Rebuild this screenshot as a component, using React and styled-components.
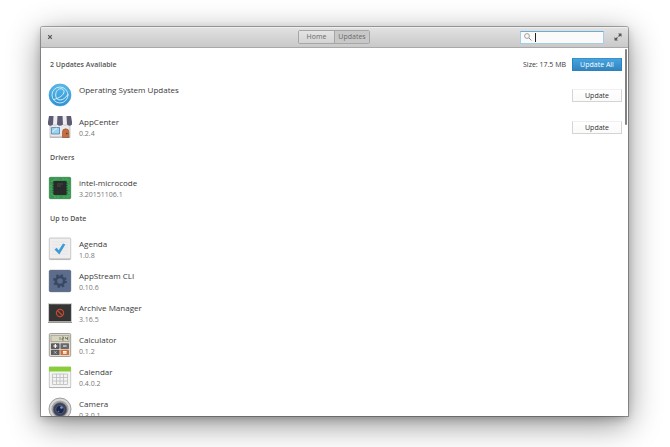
import React from "react";
import styled, { createGlobalStyle } from "styled-components";

const GlobalStyle = createGlobalStyle`
  * { box-sizing: border-box; }
  body {
    margin: 0;
    background: #fff;
    color: #3a3a3a;
    font-family: "Open Sans", "Noto Sans", sans-serif;
    font-size: 7px;
  }
  button, input { font: inherit; color: inherit; }
`;

const Desktop = styled.div`
  height: 100vh;
  padding: 27px 42px 31px 41px;
  display: flex;
`;

const Window = styled.main`
  flex: 1;
  min-width: 0;
  display: flex;
  flex-direction: column;
  background: #fff;
  border-radius: 2px 2px 0 0;
  box-shadow: 0 0 0 1px rgba(0, 0, 0, 0.3), 0 3px 8px rgba(0, 0, 0, 0.2),
    0 8px 32px rgba(0, 0, 0, 0.45);
`;

const HeaderBar = styled.header`
  height: 21px;
  flex: none;
  display: grid;
  grid-template-columns: 1fr auto 1fr;
  align-items: center;
  padding: 0 6px 0 5px;
  background: linear-gradient(#e2e2e2, #c9c9c9);
  border-bottom: 1px solid #a9a9a9;
  border-radius: 2px 2px 0 0;
  box-shadow: inset 0 1px #efefef;
`;

const IconButton = styled.button`
  width: 8px;
  height: 8px;
  padding: 0;
  border: 0;
  background: none;
  display: grid;
  place-items: center;
`;

const Switcher = styled.nav`
  display: flex;
  height: 14px;
  border: 1px solid #a6a6a6;
  border-radius: 2px;
  overflow: hidden;
`;

const SwitchButton = styled.button`
  width: 35px;
  padding: 0;
  border: 0;
  line-height: 12px;
  color: #686868;
  background: ${(p) => (p.$active ? "#c8c8c8" : "linear-gradient(#e4e4e4, #d4d4d4)")};

  & + & { border-left: 1px solid #a6a6a6; }
`;

const HeaderEnd = styled.div`
  display: flex;
  justify-content: flex-end;
  align-items: center;
  gap: 10px;
`;

const SearchBox = styled.label`
  position: relative;
  width: 84px;
  height: 13px;
  display: flex;
  align-items: center;
  gap: 3px;
  padding-left: 3px;
  background: #fafafa;
  border: 1px solid #a4cde6;
  border-top-color: #6aaed8;
`;

const SearchInput = styled.input`
  flex: 1;
  min-width: 0;
  height: 11px;
  padding: 0;
  border: 0;
  outline: 0;
  background: none;
  caret-color: transparent;
`;

const Caret = styled.span`
  position: absolute;
  left: 14px;
  top: 1px;
  width: 1px;
  height: 9px;
  background: #222;
`;

const Content = styled.div`
  position: relative;
  flex: 1;
  min-height: 0;
  overflow: hidden;
  padding: 2px 6px 0 7px;
`;

const ScrollThumb = styled.span`
  position: absolute;
  top: 1px;
  right: 1px;
  width: 2px;
  height: 76px;
  border-radius: 1px;
  background: #828282;
`;

const SectionHead = styled.div`
  height: 29px;
  display: flex;
  align-items: center;
  gap: 6px;
  padding-left: 2px;
`;

const SectionTitle = styled.h2`
  flex: 1;
  margin: 0;
  font-size: 7px;
  font-weight: 600;
  color: #555;
`;

const List = styled.ul`
  margin: 0;
  padding: 0;
  list-style: none;
`;

const Row = styled.li`
  height: 32px;
  display: flex;
  align-items: center;
  gap: 7px;
`;

const AppIcon = styled.svg`
  width: 24px;
  height: 24px;
  flex: none;
`;

const Details = styled.div`
  flex: 1;
  height: 24px;
`;

const Name = styled.div`
  font-size: 8px;
  line-height: 13px;
`;

const Version = styled.div`
  line-height: 12px;
  color: #777;
`;

const ActionButton = styled.button`
  width: 50px;
  height: 13px;
  padding: 0;
  line-height: 11px;
  border: 1px solid ${(p) => (p.$primary ? "#2f81bb" : "#d4d4d4")};
  border-top-color: ${(p) => (p.$primary ? "#3b90ca" : "#f0f0f0")};
  color: ${(p) => (p.$primary ? "#fff" : "#333")};
  background: ${(p) => (p.$primary ? "linear-gradient(#45a3df, #3185c0)" : "linear-gradient(#fff, #fafafa)")};
`;

const icons = {
  system: (
    <>
      <defs>
        <linearGradient id="sys" x1="0" y1="0" x2="0" y2="1">
          <stop stopColor="#5abbe9" />
          <stop offset="1" stopColor="#2d91d2" />
        </linearGradient>
      </defs>
      <circle cx="12" cy="12" r="11" fill="url(#sys)" stroke="#3a9bd3" strokeWidth=".6" />
      <g fill="none" stroke="#e6f6ff" strokeLinecap="round">
        <circle cx="12" cy="12" r="8" strokeWidth=".8" />
        <path d="M5.500 16.500C11 15.500 16 12 16 8.700c0-2-1.500-3-3.300-3-3 0-5 3-5 6.300 0 3 1.600 5 4.300 5 3 0 5.500-2 7.500-5" strokeWidth=".9" />
      </g>
    </>
  ),
  store: (
    <>
      <path d="M2 8h20v14.500H2z" fill="#e9e9ec" stroke="#aaa" strokeWidth=".6" />
      <path d="M2 21.500h20v1.300H2z" fill="#b9b3b4" />
      <path d="M1 1h22l1 6v2.500H0V7z" fill="#efecee" />
      <path d="M1 1h4.500L5 9.500Q2.500 12 0 9.500V7zM9.500 1h5l.5 8.500q-3 2.500-6 0zM18.500 1H23l1 6v2.500q-2.500 2.500-5 0z" fill="#5e5b75" />
      <path d="M5 9.500q2 2 4 0M15 9.500q2 2 4 0" fill="#e4e1e4" stroke="#b9b6bd" strokeWidth=".5" />
      <path d="M3.500 12.500h8V19h-8z" fill="#9bd3ef" stroke="#5583a6" strokeWidth=".8" />
      <path d="m4 17 5-4" stroke="#c6e9f8" strokeWidth="1.200" />
      <path d="M14.500 22.500V17a3.200 3.200 0 0 1 6.400 0v5.500z" fill="#c36f41" stroke="#8e4c2a" strokeWidth=".6" />
      <circle cx="18.800" cy="18.500" r=".8" fill="#5d2f1a" />
    </>
  ),
  chip: (
    <>
      <rect x="1.300" y="1.300" width="21.400" height="21.400" rx="1" fill="#369650" stroke="#26733a" strokeWidth=".6" />
      <path d="M3 5h3V3h5M14 3h6v4M3 9v6M3 18h3v3h6M15 21h6v-5M21 9v4" fill="none" stroke="#62b471" strokeWidth=".7" strokeDasharray="2 1" />
      <path d="M4.500 7h15M4.500 9.500h15M4.500 12h15M4.500 14.500h15M4.500 17h15" stroke="#184d28" strokeWidth="1" />
      <rect x="5.500" y="5" width="13" height="14" rx=".6" fill="#292b2b" />
      <path d="M9 8h6M9 10h4" stroke="#505050" strokeWidth=".8" />
    </>
  ),
  agenda: (
    <>
      <rect x="1.300" y="1" width="21.400" height="21.600" rx="1" fill="#eee" stroke="#bcbcbc" strokeWidth=".8" />
      <path d="M1.500 22h21" stroke="#aaa" />
      <path d="M4 5h16M4 8h16M4 11h16M4 14h16M4 17h16" stroke="#dfdfdf" strokeWidth=".6" />
      <path d="m6.500 12.500 2.200-1.700 2 2.400L15 6.500l2.300 1-6 10z" fill="#409bd4" />
    </>
  ),
  gear: (
    <>
      <rect x="1.300" y="1.300" width="21.400" height="21.400" rx="1.200" fill="#5c6c8c" stroke="#46546f" strokeWidth=".7" />
      <circle cx="12" cy="12" r="4.100" fill="none" stroke="#394863" strokeWidth="2.600" />
      <circle cx="12" cy="12" r="5.900" fill="none" stroke="#394863" strokeWidth="2" strokeDasharray="2.317 2.317" />
    </>
  ),
  archive: (
    <>
      <rect x="0" y="2" width="24" height="20" rx=".6" fill="#d6d6d6" />
      <rect x="1.200" y="3.600" width="21.600" height="16.400" fill="#343434" stroke="#222" strokeWidth=".5" />
      <path d="M0 21.500h24" stroke="#999" />
      <circle cx="12" cy="12" r="3.600" fill="none" stroke="#c6492f" strokeWidth="1.200" />
      <path d="m9.500 9.500 5 5" stroke="#c6492f" strokeWidth="1.200" />
    </>
  ),
  calculator: (
    <>
      <rect x="1.300" y=".5" width="21.400" height="23" rx="1.200" fill="#dcd8d4" stroke="#8e8a86" strokeWidth=".8" />
      <rect x="3" y="2.500" width="18" height="6.200" fill="#d5d4bc" stroke="#96937f" strokeWidth=".6" />
      <path d="M12 4v3M14 4h1.500v1.500H14V7h2M17.500 4v1.500h2M19.500 4v3" fill="none" stroke="#625f4f" strokeWidth=".7" />
      <rect x="3" y="10.300" width="8.500" height="5.600" rx=".6" fill="#5b5b5b" />
      <rect x="12.500" y="10.300" width="8.500" height="5.600" rx=".6" fill="#696969" />
      <rect x="3" y="16.700" width="8.500" height="5.400" rx=".6" fill="#5b5b5b" />
      <rect x="12.500" y="16.700" width="8.500" height="5.400" rx=".6" fill="#d86c35" />
      <path d="M5.300 13h4M7.300 11v4M15 13h3.600" stroke="#fff" strokeWidth="1.200" />
      <path d="m6 18.200 2.500 2.500M8.500 18.200 6 20.700" stroke="#ccc" strokeWidth=".8" />
      <path d="M15 18.700h3.600M15 20.200h3.600" stroke="#fff" strokeWidth="1.200" />
    </>
  ),
  calendar: (
    <>
      <rect x="1.300" y="2" width="21.400" height="20.600" rx=".8" fill="#f3f3f3" stroke="#b6b6b6" strokeWidth=".7" />
      <path d="M1 1.800h22V6.500H1z" fill="#88cf37" />
      <path d="M1 22.500h22" stroke="#aaa" strokeWidth=".8" />
      <path d="M4.500 9h15v10.500h-15zM4.500 12.500h15M4.500 16h15M8.500 9v10.500M12 9v10.500M15.500 9v10.500" fill="none" stroke="#bdbdbd" strokeWidth=".8" />
    </>
  ),
  camera: (
    <>
      <circle cx="12" cy="12" r="11" fill="#d8d8d8" stroke="#8b8b8b" strokeWidth=".8" />
      <circle cx="12" cy="12" r="8.600" fill="#a4a4a4" />
      <circle cx="12" cy="12.500" r="6.800" fill="#3d4258" stroke="#666" strokeWidth=".7" />
      <circle cx="12" cy="12.500" r="4.200" fill="#1b2749" stroke="#56648e" strokeWidth=".8" />
      <circle cx="13.500" cy="10.500" r="1.300" fill="#8398cb" />
      <circle cx="10.500" cy="14.500" r=".8" fill="#6176ad" />
    </>
  ),
};

const sections = [
  {
    title: "2 Updates Available",
    size: "Size: 17.5 MB",
    apps: [
      { name: "Operating System Updates", icon: "system", update: true },
      { name: "AppCenter", version: "0.2.4", icon: "store", update: true },
    ],
  },
  { title: "Drivers", apps: [{ name: "intel-microcode", version: "3.20151106.1", icon: "chip" }] },
  {
    title: "Up to Date",
    apps: [
      { name: "Agenda", version: "1.0.8", icon: "agenda" },
      { name: "AppStream CLI", version: "0.10.6", icon: "gear" },
      { name: "Archive Manager", version: "3.16.5", icon: "archive" },
      { name: "Calculator", version: "0.1.2", icon: "calculator" },
      { name: "Calendar", version: "0.4.0.2", icon: "calendar" },
      { name: "Camera", version: "0.3.0.1", icon: "camera" },
    ],
  },
];

export default function App() {
  return (
    <>
      <GlobalStyle />
      <Desktop>
        <Window>
          <HeaderBar>
            <IconButton aria-label="Close">
              <svg width="6" height="6" viewBox="0 0 6 6" aria-hidden="true">
                <path d="m1.200 1.200 3.600 3.600M4.800 1.200 1.200 4.800" stroke="#555" strokeWidth="1.200" />
              </svg>
            </IconButton>
            <Switcher aria-label="Views">
              <SwitchButton>Home</SwitchButton>
              <SwitchButton $active aria-pressed="true">Updates</SwitchButton>
            </Switcher>
            <HeaderEnd>
              <SearchBox>
                <svg width="8" height="8" viewBox="0 0 8 8" fill="none" stroke="#8a8a8a" aria-hidden="true">
                  <circle cx="3" cy="3" r="2.400" strokeWidth=".8" />
                  <path d="m5 5 2.500 2.500" strokeWidth="1" />
                </svg>
                <SearchInput type="text" aria-label="Search" />
                <Caret aria-hidden="true" />
              </SearchBox>
              <IconButton aria-label="Maximize">
                <svg width="8" height="8" viewBox="0 0 8 8" aria-hidden="true">
                  <path d="M4 .5h3.500V4zM.5 4v3.500H4z" fill="#555" />
                  <path d="M6.500 1.500 4.500 3.500M1.500 6.500l2-2" stroke="#555" strokeWidth="1.200" />
                </svg>
              </IconButton>
            </HeaderEnd>
          </HeaderBar>
          <Content>
            {sections.map((section) => (
              <section key={section.title}>
                <SectionHead>
                  <SectionTitle>{section.title}</SectionTitle>
                  {section.size && <span>{section.size}</span>}
                  {section.size && <ActionButton $primary>Update All</ActionButton>}
                </SectionHead>
                <List>
                  {section.apps.map((app) => (
                    <Row key={app.name}>
                      <AppIcon viewBox="0 0 24 24" aria-hidden="true">{icons[app.icon]}</AppIcon>
                      <Details>
                        <Name>{app.name}</Name>
                        {app.version && <Version>{app.version}</Version>}
                      </Details>
                      {app.update && <ActionButton aria-label={`Update ${app.name}`}>Update</ActionButton>}
                    </Row>
                  ))}
                </List>
              </section>
            ))}
            <ScrollThumb aria-hidden="true" />
          </Content>
        </Window>
      </Desktop>
    </>
  );
}
